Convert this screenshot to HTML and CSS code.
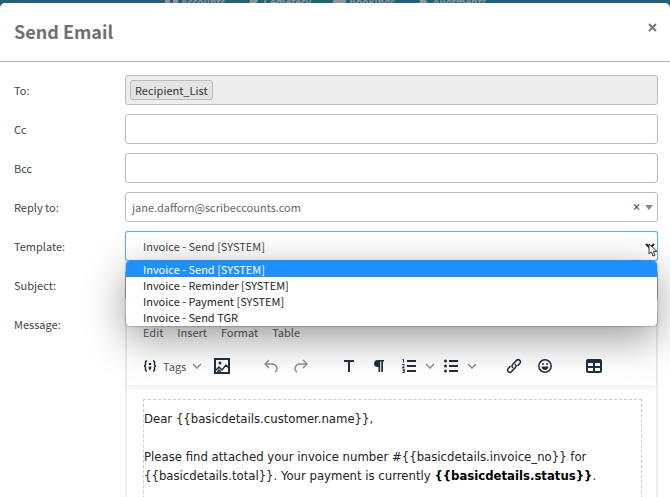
FILE: index.html
```html
<!DOCTYPE html>
<html lang="en">
<head>
    <meta charset="UTF-8">
    <meta name="viewport" content="width=device-width, initial-scale=1.0">
    <title>Send Email</title>
    <link rel="stylesheet" href="styles.css">
</head>
<body>
    <nav class="topnav">
        <a href="#"><svg width="13" height="12" viewBox="0 0 13 12"><path d="M0 0h5v10H0zM8 0h5v10H8z"/></svg>Accounts</a>
        <a href="#"><svg width="13" height="12" viewBox="0 0 13 12"><path d="M1 10L4 2l9-2-4 8z"/></svg>Cemetery</a>
        <a href="#"><svg width="13" height="12" viewBox="0 0 13 12"><path d="M0 1h13v9H0z"/></svg>Bookings</a>
        <a href="#"><svg width="13" height="12" viewBox="0 0 13 12"><path d="M1 10L3 4l5-3 2 5-1 4z"/></svg>Allotments</a>
    </nav>

    <main class="modal" role="dialog" aria-labelledby="modal-title">
        <header class="modal-header">
            <h1 id="modal-title">Send Email</h1>
            <button type="button" class="close" aria-label="Close">
                <svg width="9" height="9" viewBox="0 0 9 9"><path d="M1 1l7 7M8 1L1 8"/></svg>
            </button>
        </header>

        <form class="modal-body">
            <div class="form-row">
                <span class="label">To:</span>
                <div class="control recipients">
                    <span class="chip">Recipient_List</span>
                </div>
            </div>
            <div class="form-row">
                <label for="cc">Cc</label>
                <input class="control" type="text" id="cc">
            </div>
            <div class="form-row">
                <label for="bcc">Bcc</label>
                <input class="control" type="text" id="bcc">
            </div>
            <div class="form-row">
                <label for="reply">Reply to:</label>
                <div class="control combo">
                    <select id="reply">
                        <option>jane.dafforn@scribeccounts.com</option>
                    </select>
                    <button type="button" class="clear" aria-label="Clear">×</button>
                    <span class="caret"></span>
                </div>
            </div>
            <div class="form-row">
                <label for="template">Template:</label>
                <div class="template">
                    <select class="control" id="template">
                        <option>Invoice - Send [SYSTEM]</option>
                        <option>Invoice - Reminder [SYSTEM]</option>
                        <option>Invoice - Payment [SYSTEM]</option>
                        <option>Invoice - Send TGR</option>
                    </select>
                    <svg class="chevron" width="10" height="8" viewBox="0 0 10 8"><path d="M1 2l4 4 4-4"/></svg>
                    <ul class="options" role="listbox">
                        <li class="selected" role="option" aria-selected="true">Invoice - Send [SYSTEM]</li>
                        <li role="option">Invoice - Reminder [SYSTEM]</li>
                        <li role="option">Invoice - Payment [SYSTEM]</li>
                        <li role="option">Invoice - Send TGR</li>
                    </ul>
                    <svg class="pointer" width="10" height="14" viewBox="0 0 10 14"><path d="M1 1v10l2.4-2.2L5 13l2-.8-1.7-3.8H9z"/></svg>
                </div>
            </div>
            <div class="form-row">
                <label for="subject">Subject:</label>
                <input class="control" type="text" id="subject">
            </div>
            <div class="form-row message-row">
                <span class="label">Message:</span>
                <div class="editor">
                    <div class="editor-header">
                        <div class="menubar">
                            <button type="button">Edit</button>
                            <button type="button">Insert</button>
                            <button type="button">Format</button>
                            <button type="button">Table</button>
                        </div>
                        <div class="toolbar">
                            <div class="group tools">
                                <button type="button" class="tags">
                                    <svg width="14" height="12" viewBox="0 0 14 12"><path class="line" d="M4 1H3.500Q2.500 1 2.500 2.200V4.500Q2.500 6 1 6q1.500 0 1.500 1.500v2.300Q2.500 11 3.500 11H4M10 1h.5q1 0 1 1.200V4.500Q11.500 6 13 6q-1.500 0-1.500 1.500v2.300q0 1.200-1 1.200H10"/><circle cx="7" cy="4" r="1.300"/><path d="M5.700 6.600h2.600v1.700L7 10.300H5.700L6.500 9h-.8z"/></svg>
                                    Tags
                                    <svg class="arrow" width="10" height="6" viewBox="0 0 10 6"><path class="line" d="M1 1l4 4 4-4"/></svg>
                                </button>
                                <button type="button" aria-label="Image">
                                    <svg width="16" height="16" viewBox="0 0 16 16"><path class="line" d="M1 1h14v14H1z"/><path class="mid" d="M1 13l4-4 3 3 4-5 3 3M3 15l2-3 2 2"/><circle cx="6" cy="5" r="1.500"/></svg>
                                </button>
                            </div>
                            <div class="group history">
                                <button type="button" aria-label="Undo">
                                    <svg width="14" height="14" viewBox="0 0 14 14"><path class="line" d="M5 1L1 5l4 4M1 5h6q6 0 6 5 0 2-2 3"/></svg>
                                </button>
                                <button type="button" aria-label="Redo">
                                    <svg width="14" height="14" viewBox="0 0 14 14"><path class="line" d="M9 1l4 4-4 4M13 5H7q-6 0-6 5 0 2 2 3"/></svg>
                                </button>
                            </div>
                            <div class="group">
                                <button type="button" aria-label="Text">
                                    <svg width="14" height="12" viewBox="0 0 14 12"><path d="M2 0h10v2H8v10H6V2H2z"/></svg>
                                </button>
                                <button type="button" aria-label="Paragraph">
                                    <svg width="14" height="12" viewBox="0 0 14 12"><path d="M6 0h6v1.500H11V12H9.300V1.500H8.200V12H6.500V7H6Q2 7 2 3.500T6 0z"/></svg>
                                </button>
                                <div class="group lists">
                                    <button type="button" class="list" aria-label="Numbered list">
                                        <svg width="14" height="14" viewBox="0 0 14 14"><path class="line" d="M5 2h9M5 7h9M5 12h9"/><path class="thin" d="M.5 .5h1v3M.3 5.500h1.800v1L.5 8.500h2M.3 10h2v1.500h-1.200 1.200V13.500h-2"/></svg>
                                        <svg class="arrow" width="10" height="6" viewBox="0 0 10 6"><path class="line" d="M1 1l4 4 4-4"/></svg>
                                    </button>
                                    <button type="button" class="list" aria-label="Bullet list">
                                        <svg width="14" height="14" viewBox="0 0 14 14"><path class="line" d="M5 2h9M5 7h9M5 12h9"/><circle cx="1.500" cy="2" r="1.500"/><circle cx="1.500" cy="7" r="1.500"/><circle cx="1.500" cy="12" r="1.500"/></svg>
                                        <svg class="arrow" width="10" height="6" viewBox="0 0 10 6"><path class="line" d="M1 1l4 4 4-4"/></svg>
                                    </button>
                                </div>
                            </div>
                            <div class="group insert">
                                <button type="button" aria-label="Link">
                                    <svg width="16" height="16" viewBox="0 0 16 16"><path class="mid" d="M7 10q-2-2 0-4l3.500-3.600q1.600-1.500 3.200 0t0 3.200L11.500 8M9 6q2 2 0 4l-3.500 3.600q-1.600 1.500-3.200 0t0-3.200L4.500 8"/></svg>
                                </button>
                                <button type="button" aria-label="Emoji">
                                    <svg width="14" height="14" viewBox="0 0 14 14"><circle class="mid" cx="7" cy="7" r="6.200"/><circle cx="5" cy="5" r="1"/><circle cx="9" cy="5" r="1"/><path d="M3.500 7.500h7Q10 11 7 11T3.500 7.500z"/></svg>
                                </button>
                            </div>
                            <div class="group">
                                <button type="button" aria-label="Insert table">
                                    <svg width="16" height="14" viewBox="0 0 16 14"><path fill-rule="evenodd" d="M2 0h12q2 0 2 2v10q0 2-2 2H2q-2 0-2-2V2q0-2 2-2zM2 4v3h5V4zM9 4v3h5V4zM2 9v3h5V9zM9 9v3h5V9z"/></svg>
                                </button>
                            </div>
                        </div>
                    </div>
                    <div class="editor-page" contenteditable="true" role="textbox" aria-label="Message">
                        <p>Dear {{basicdetails.customer.name}},</p>
                        <p>Please find attached your invoice number #{{basicdetails.invoice_no}} for {{basicdetails.total}}. Your payment is currently <strong>{{basicdetails.status}}</strong>.</p>
                    </div>
                </div>
            </div>
        </form>
    </main>
</body>
</html>
```
FILE: styles.css
```css
* {
    box-sizing: border-box;
}
body {
    margin: 0;
    height: 100vh;
    overflow: hidden;
    background-color: #1f637a;
    color: #444;
    font-family: "Noto Sans CJK SC", "Noto Sans", sans-serif;
    font-size: 11px;
    line-height: 20px;
}
button, input, select {
    font: inherit;
    color: inherit;
}
button {
    border: none;
    padding: 0;
    background: none;
}
.topnav {
    display: flex;
    align-items: center;
    gap: 22px;
    height: 3px;
    padding-left: 165px;
    overflow: hidden;
}
.topnav a {
    display: flex;
    align-items: center;
    gap: 3px;
    color: #8a969b;
    font-size: 10px;
    font-weight: bold;
    line-height: 12px;
    text-decoration: none;
}
.topnav svg {
    fill: #8a969b;
}
.modal {
    min-height: 100vh;
    border-radius: 5px 5px 0 0;
    background-color: #fff;
}
.modal-header {
    display: flex;
    justify-content: space-between;
    align-items: flex-start;
    height: 59px;
    padding: 13px 12px 0 14px;
    border-bottom: 1px solid #a3afbe;
}
.modal-header h1 {
    margin: 0;
    color: #707070;
    font-size: 18px;
    font-weight: bold;
    line-height: 30px;
}
.close {
    display: flex;
    padding: 7px 1px;
}
.close svg {
    fill: none;
    stroke: #777;
    stroke-width: 2;
}
.modal-body {
    display: flex;
    flex-direction: column;
    gap: 9px;
    padding: 13px 12px 0 14px;
}
.form-row {
    display: grid;
    grid-template-columns: 111px 1fr;
    align-items: center;
}
.control {
    width: 100%;
    height: 30px;
    border: 1px solid #bbb;
    border-radius: 3px;
    background-color: #fff;
}
.recipients {
    display: flex;
    align-items: center;
    padding: 0 4px;
    background-color: #ededed;
}
.chip {
    padding: 0 4px;
    height: 20px;
    border: 1px solid #bbb;
    border-radius: 3px;
    background-color: #e4e4e4;
    color: #333;
    line-height: 18px;
}
.combo {
    display: flex;
    align-items: center;
    gap: 4px;
    padding: 0 4px 0 6px;
}
.combo select {
    flex: 1;
    appearance: none;
    padding: 0;
    border: none;
    background: none;
    color: #666;
}
.clear {
    font-size: 9px;
    font-weight: bold;
}
.caret {
    border: 4px solid transparent;
    border-top: 5px solid #888;
    border-bottom: 0;
}
.template {
    position: relative;
}
.template select {
    display: block;
    appearance: none;
    padding: 0 17px;
    border-color: #66afe9;
    box-shadow: 0 0 1px #66afe9;
}
.chevron {
    position: absolute;
    top: 11px;
    right: 3px;
    fill: none;
    stroke: #222;
    stroke-width: 2;
}
.options {
    position: absolute;
    top: 30px;
    left: 1px;
    right: 1px;
    z-index: 1;
    margin: 0;
    padding: 0 0 1px;
    overflow: hidden;
    list-style: none;
    border-radius: 4px;
    background-color: #fff;
    color: #222;
    line-height: 16px;
    box-shadow: 0 0 2px rgba(0, 0, 0, 0.6), 0 12px 40px rgba(0, 0, 0, 0.4);
}
.options li {
    padding-left: 17px;
}
.options .selected {
    background-color: #1e90ff;
    color: #fff;
}
.pointer {
    position: absolute;
    top: 12px;
    right: 0;
    z-index: 2;
    fill: #fff;
    stroke: #333;
}
.message-row {
    align-items: start;
}
.message-row .label {
    padding-top: 5px;
}
.editor {
    border: 2px solid #eee;
    border-radius: 8px;
    color: #222f3e;
}
.editor-header {
    box-shadow: 0 3px 4px rgba(0, 0, 0, 0.06);
}
.menubar {
    display: flex;
    gap: 14px;
    padding: 11px 16px 0;
    color: #555e69;
}
.toolbar {
    display: flex;
    align-items: center;
    gap: 29px;
    height: 43px;
    padding: 4px 16px 0;
}
.toolbar svg {
    display: block;
    fill: #222f3e;
}
.toolbar .line, .toolbar .mid, .toolbar .thin {
    fill: none;
    stroke: #222f3e;
    stroke-width: 2;
}
.toolbar .mid {
    stroke-width: 1.5;
}
.toolbar .thin {
    stroke-width: 1;
}
.group {
    display: flex;
    align-items: center;
    gap: 16px;
}
.tools {
    gap: 12px;
}
.history {
    padding: 0 5px;
}
.lists {
    gap: 9px;
}
.insert {
    padding-right: 5px;
}
.tags, .list {
    display: flex;
    align-items: center;
    gap: 6px;
    color: #555e69;
}
.list {
    gap: 9px;
}
.toolbar .history .line {
    stroke: #8c939b;
    stroke-width: 1.5;
}
.toolbar .tags .line {
    stroke-width: 1.5;
}
.toolbar .arrow .line {
    stroke: #8c939b;
    stroke-width: 1.5;
}
.editor-page {
    margin: 14px 14px 0 16px;
    min-height: 140px;
    border: 1px dashed #ccc;
    color: #222;
    font-family: "DejaVu Sans Condensed", "Noto Sans", sans-serif;
    font-size: 13px;
    line-height: 19px;
}
.editor-page p {
    margin: 9px 0 19px;
}
.editor-page strong {
    color: #000;
}
```
